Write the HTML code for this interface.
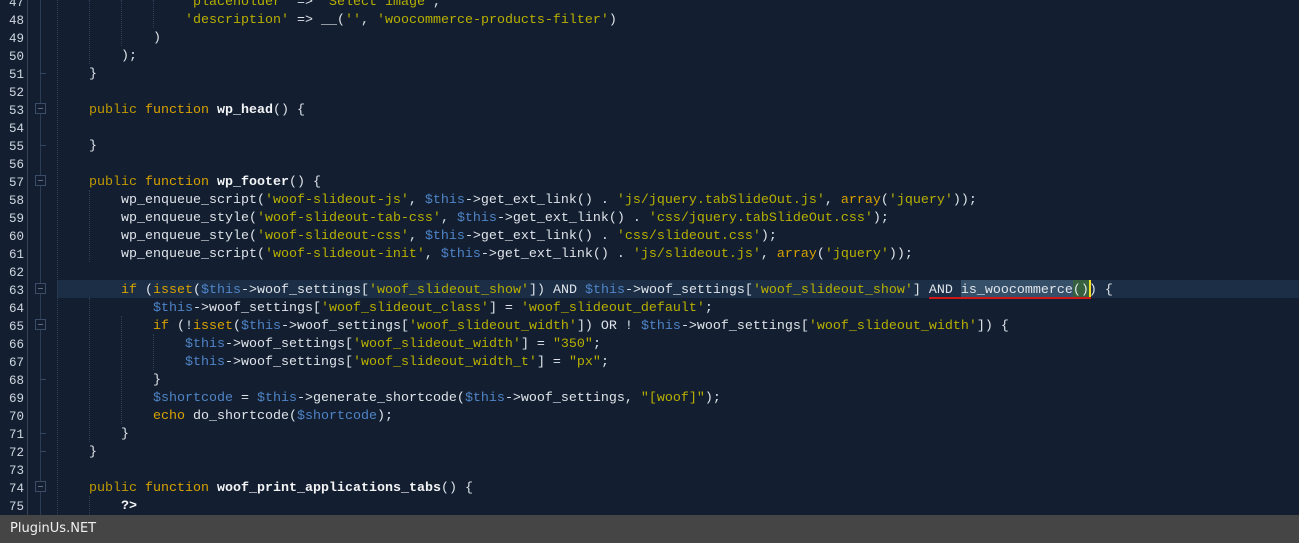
<!DOCTYPE html>
<html><head><meta charset="utf-8"><style>
html,body{margin:0;padding:0;}
body{width:1299px;height:543px;background:#131e30;position:relative;overflow:hidden;font-family:"Liberation Mono","Courier New",monospace;font-size:13.33px;}
.ln{position:absolute;left:0;width:24px;text-align:right;color:#d0d8e0;height:18px;line-height:18px;font-size:12.5px;}
.c{position:absolute;left:57px;white-space:pre;color:#dfe4ea;height:18px;line-height:18px;}
.k{color:#d8a200}.p{color:#c09a00}.s{color:#b8b000}.v{color:#4f85c8}.f{color:#f2f4f6;font-weight:bold}
.g{position:absolute;border-left:1px dotted #2e3e56;}
.fold{position:absolute;left:35px;width:9px;height:9px;border:1px solid #3a4c66;}
.fold:after{content:"";position:absolute;left:2px;top:4px;width:5px;height:1px;background:#5a6c86;}
.tick{position:absolute;left:40px;width:6px;height:1px;background:#34455e;}
#t{position:absolute;left:0;top:2px;width:1299px;height:513px;}
</style></head><body>
<div style="position:absolute;left:27px;top:0;width:1px;height:515px;background:#3a4352"></div>
<div style="position:absolute;left:57px;top:280px;width:1242px;height:18px;background:#1b2e46"></div>
<div style="position:absolute;left:961px;top:280px;width:112px;height:18px;background:#36506a"></div>
<div style="position:absolute;left:1073px;top:280px;width:16px;height:18px;background:#36603e"></div>
<div style="position:absolute;left:1089px;top:280px;width:2px;height:18px;background:#f0e020"></div>
<div style="position:absolute;left:929px;top:297px;width:162px;height:2px;background:#d01818"></div>
<div class="g" style="left:57px;top:0;height:515px"></div>
<div class="g" style="left:89px;top:0;height:64px"></div>
<div class="g" style="left:121px;top:0;height:46px"></div>
<div class="g" style="left:153px;top:0;height:28px"></div>
<div class="g" style="left:89px;top:190px;height:72px"></div>
<div class="g" style="left:89px;top:298px;height:144px"></div>
<div class="g" style="left:121px;top:316px;height:108px"></div>
<div class="g" style="left:153px;top:334px;height:36px"></div>
<div class="g" style="left:89px;top:496px;height:19px"></div>
<div style="position:absolute;left:40px;top:0;width:1px;height:515px;background:#2c3c54"></div>
<div class="fold" style="top:103px;background:#131e30"></div><div class="fold" style="top:175px;background:#131e30"></div><div class="fold" style="top:283px;background:#131e30"></div><div class="fold" style="top:319px;background:#131e30"></div><div class="fold" style="top:481px;background:#131e30"></div>
<div class="tick" style="top:73px"></div><div class="tick" style="top:145px"></div><div class="tick" style="top:379px"></div><div class="tick" style="top:433px"></div><div class="tick" style="top:451px"></div>

<div id="t">
<div class="ln" style="top:-8px">47</div><div class="c" style="top:-8px">                <span class="s">'placeholder'</span> =&gt; <span class="s">'Select image'</span>,</div>
<div class="ln" style="top:10px">48</div><div class="c" style="top:10px">                <span class="s">'description'</span> =&gt; __(<span class="s">''</span>, <span class="s">'woocommerce-products-filter'</span>)</div>
<div class="ln" style="top:28px">49</div><div class="c" style="top:28px">            )</div>
<div class="ln" style="top:46px">50</div><div class="c" style="top:46px">        );</div>
<div class="ln" style="top:64px">51</div><div class="c" style="top:64px">    }</div>
<div class="ln" style="top:82px">52</div>
<div class="ln" style="top:100px">53</div><div class="c" style="top:100px">    <span class="p">public</span> <span class="k">function</span> <span class="f">wp_head</span>() {</div>
<div class="ln" style="top:118px">54</div>
<div class="ln" style="top:136px">55</div><div class="c" style="top:136px">    }</div>
<div class="ln" style="top:154px">56</div>
<div class="ln" style="top:172px">57</div><div class="c" style="top:172px">    <span class="p">public</span> <span class="k">function</span> <span class="f">wp_footer</span>() {</div>
<div class="ln" style="top:190px">58</div><div class="c" style="top:190px">        wp_enqueue_script(<span class="s">'woof-slideout-js'</span>, <span class="v">$this</span>-&gt;get_ext_link() . <span class="s">'js/jquery.tabSlideOut.js'</span>, <span class="k">array</span>(<span class="s">'jquery'</span>));</div>
<div class="ln" style="top:208px">59</div><div class="c" style="top:208px">        wp_enqueue_style(<span class="s">'woof-slideout-tab-css'</span>, <span class="v">$this</span>-&gt;get_ext_link() . <span class="s">'css/jquery.tabSlideOut.css'</span>);</div>
<div class="ln" style="top:226px">60</div><div class="c" style="top:226px">        wp_enqueue_style(<span class="s">'woof-slideout-css'</span>, <span class="v">$this</span>-&gt;get_ext_link() . <span class="s">'css/slideout.css'</span>);</div>
<div class="ln" style="top:244px">61</div><div class="c" style="top:244px">        wp_enqueue_script(<span class="s">'woof-slideout-init'</span>, <span class="v">$this</span>-&gt;get_ext_link() . <span class="s">'js/slideout.js'</span>, <span class="k">array</span>(<span class="s">'jquery'</span>));</div>
<div class="ln" style="top:262px">62</div>
<div class="ln" style="top:280px">63</div><div class="c" style="top:280px">        <span class="k">if</span> (<span class="k">isset</span>(<span class="v">$this</span>-&gt;woof_settings[<span class="s">'woof_slideout_show'</span>]) AND <span class="v">$this</span>-&gt;woof_settings[<span class="s">'woof_slideout_show'</span>] AND is_woocommerce()) {</div>
<div class="ln" style="top:298px">64</div><div class="c" style="top:298px">            <span class="v">$this</span>-&gt;woof_settings[<span class="s">'woof_slideout_class'</span>] = <span class="s">'woof_slideout_default'</span>;</div>
<div class="ln" style="top:316px">65</div><div class="c" style="top:316px">            <span class="k">if</span> (!<span class="k">isset</span>(<span class="v">$this</span>-&gt;woof_settings[<span class="s">'woof_slideout_width'</span>]) OR ! <span class="v">$this</span>-&gt;woof_settings[<span class="s">'woof_slideout_width'</span>]) {</div>
<div class="ln" style="top:334px">66</div><div class="c" style="top:334px">                <span class="v">$this</span>-&gt;woof_settings[<span class="s">'woof_slideout_width'</span>] = <span class="s">"350"</span>;</div>
<div class="ln" style="top:352px">67</div><div class="c" style="top:352px">                <span class="v">$this</span>-&gt;woof_settings[<span class="s">'woof_slideout_width_t'</span>] = <span class="s">"px"</span>;</div>
<div class="ln" style="top:370px">68</div><div class="c" style="top:370px">            }</div>
<div class="ln" style="top:388px">69</div><div class="c" style="top:388px">            <span class="v">$shortcode</span> = <span class="v">$this</span>-&gt;generate_shortcode(<span class="v">$this</span>-&gt;woof_settings, <span class="s">"[woof]"</span>);</div>
<div class="ln" style="top:406px">70</div><div class="c" style="top:406px">            <span class="k">echo</span> do_shortcode(<span class="v">$shortcode</span>);</div>
<div class="ln" style="top:424px">71</div><div class="c" style="top:424px">        }</div>
<div class="ln" style="top:442px">72</div><div class="c" style="top:442px">    }</div>
<div class="ln" style="top:460px">73</div>
<div class="ln" style="top:478px">74</div><div class="c" style="top:478px">    <span class="p">public</span> <span class="k">function</span> <span class="f">woof_print_applications_tabs</span>() {</div>
<div class="ln" style="top:496px">75</div><div class="c" style="top:496px">        <span class="f">?&gt;</span></div>
</div>

<div style="position:absolute;left:0;top:515px;width:1299px;height:28px;background:#454545;color:#f0f0f0;font-family:'DejaVu Sans','Liberation Sans',sans-serif;font-size:13px;line-height:28px;padding-left:10px;">PluginUs.NET</div>
</body></html>
